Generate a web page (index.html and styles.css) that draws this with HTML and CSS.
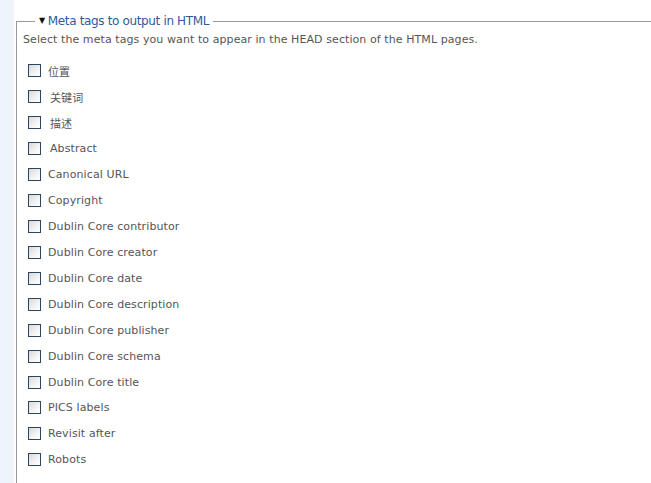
FILE: index.html
```html
<!DOCTYPE html>
<html lang="zh">
<head>
    <meta charset="UTF-8">
    <title>Meta tags</title>
    <link rel="stylesheet" href="styles.css">
</head>
<body>
    <div class="page">
        <div class="sidebar"></div>
        <div class="main">
            <fieldset class="metatags">
                <legend><span class="arrow">&#9660;</span>Meta tags to output in HTML</legend>
                <p class="description">Select the meta tags you want to appear in the HEAD section of the HTML pages.</p>
                <div class="options">
                    <label class="option"><input type="checkbox"> <span>位置</span></label>
                    <label class="option"><input type="checkbox"> <span class="cjk">关键词</span></label>
                    <label class="option"><input type="checkbox"> <span class="cjk">描述</span></label>
                    <label class="option"><input type="checkbox"> <span class="cjk">Abstract</span></label>
                    <label class="option"><input type="checkbox"> <span>Canonical URL</span></label>
                    <label class="option"><input type="checkbox"> <span>Copyright</span></label>
                    <label class="option"><input type="checkbox"> <span>Dublin Core contributor</span></label>
                    <label class="option"><input type="checkbox"> <span>Dublin Core creator</span></label>
                    <label class="option"><input type="checkbox"> <span>Dublin Core date</span></label>
                    <label class="option"><input type="checkbox"> <span>Dublin Core description</span></label>
                    <label class="option"><input type="checkbox"> <span>Dublin Core publisher</span></label>
                    <label class="option"><input type="checkbox"> <span>Dublin Core schema</span></label>
                    <label class="option"><input type="checkbox"> <span>Dublin Core title</span></label>
                    <label class="option"><input type="checkbox"> <span>PICS labels</span></label>
                    <label class="option"><input type="checkbox"> <span>Revisit after</span></label>
                    <label class="option"><input type="checkbox"> <span>Robots</span></label>
                </div>
            </fieldset>
        </div>
    </div>
</body>
</html>
```

FILE: styles.css
```css
html, body {
    margin: 0;
    height: 100%;
    overflow: hidden;
    background-color: #fff;
}
body {
    font-family: 'DejaVu Sans', 'Noto Sans CJK SC', sans-serif;
    font-size: 11px;
    color: #555;
}
.page {
    display: flex;
    height: 100%;
}
.sidebar {
    width: 14px;
    flex-shrink: 0;
    background-color: #eef4fa;
}
.main {
    flex: 1;
    padding-left: 2px;
    padding-top: 14px;
}
.metatags {
    margin: 0;
    padding: 0 0 0 6px;
    border: none;
    border-top: 1px solid #999;
    border-left: 1px solid #999;
    min-height: 480px;
}
.metatags legend {
    margin-left: 12px;
    padding: 0 4px;
    color: #2d5a9e;
    font-size: 12px;
    letter-spacing: -0.35px;
}
.metatags legend .arrow {
    font-size: 8px;
    margin-right: 3px;
    color: #111;
    vertical-align: 2px;
}
.description {
    margin: 5px 0 12px 0;
    letter-spacing: 0.08px;
}
.options {
    display: flex;
    flex-direction: column;
}
.option {
    display: flex;
    align-items: center;
    height: 25.93px;
    padding-left: 5px;
    letter-spacing: 0.1px;
}
.option input {
    appearance: none;
    -webkit-appearance: none;
    width: 13px;
    height: 13px;
    margin: 0 7px 0 0;
    border: 1px solid #2c4660;
    background: linear-gradient(135deg, #d8d8d8, #f4f4f4 60%, #fff);
    box-sizing: border-box;
}
.option .cjk {
    padding-left: 2px;
}
```
